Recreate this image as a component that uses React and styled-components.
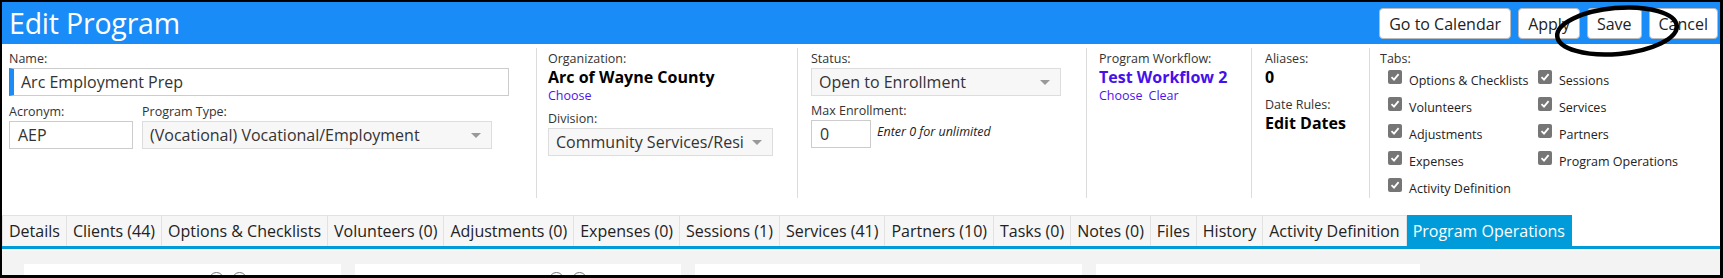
import React from 'react'
import styled, { createGlobalStyle } from 'styled-components'

const GlobalStyle = createGlobalStyle`
	html, body {
		margin: 0;
		padding: 0;
		background: #fff;
	}
	body {
		font-family: 'Segoe UI', 'Open Sans', 'Noto Sans', sans-serif;
		color: #222;
	}
`

const Frame = styled.div`
	position: relative;
	width: 1723px;
	height: 278px;
	box-sizing: border-box;
	border: 2px solid #000;
	border-right-width: 3px;
	border-bottom-width: 3px;
	overflow: hidden;
	display: flex;
	flex-direction: column;
`

const Header = styled.header`
	height: 42px;
	flex: none;
	background: #1a8cf8;
	display: flex;
	align-items: center;
	justify-content: space-between;
	padding: 0 2px 0 7px;
`

const Title = styled.h1`
	margin: 0;
	font-size: 28.5px;
	font-weight: 400;
	color: #fff;
	letter-spacing: -0.2px;
`

const Actions = styled.div`
	display: flex;
	gap: 7px;
	padding-top: 1px;
`

const HeaderButton = styled.button`
	height: 31px;
	padding: 0 9px;
	background: #fff;
	border: 1px solid #bbb;
	border-radius: 4px;
	font-family: inherit;
	font-size: 16px;
	color: #222;
`

const Annotation = styled.svg`
	position: absolute;
	left: 1545px;
	top: 0;
	width: 140px;
	height: 62px;
	pointer-events: none;
`

const Form = styled.div`
	display: flex;
	height: 171px;
	flex: none;
`

const Column = styled.div`
	width: ${(p) => p.$width}px;
	flex: ${(p) => (p.$width ? 'none' : '1')};
	box-sizing: border-box;
	margin: 4px 0 17px;
	padding: 4px 0 0 ${(p) => p.$pad}px;
	border-left: ${(p) => (p.$first ? 'none' : '1px solid #dcdcdc')};
`

const Label = styled.div`
	font-size: 12.5px;
	line-height: 14px;
	color: #333;
	margin-top: ${(p) => p.$gap || 0}px;
`

const Value = styled.div`
	font-size: 16px;
	font-weight: 700;
	line-height: 22px;
	color: ${(p) => (p.$link ? '#4510ec' : '#000')};
`

const Links = styled.div`
	display: flex;
	gap: 6px;
	font-size: 12.5px;
	line-height: 16px;
	color: #4c14ee;
`

const TextInput = styled.div`
	box-sizing: border-box;
	width: ${(p) => p.$width}px;
	height: 28px;
	margin-top: 2px;
	display: flex;
	align-items: center;
	padding-left: ${(p) => (p.$required ? 7 : 8)}px;
	border: 1px solid #ccc;
	border-left: ${(p) => (p.$required ? '5px solid #1a8cf8' : '1px solid #ccc')};
	background: #fff;
	font-size: 16px;
	color: #333;
`

const Select = styled.div`
	box-sizing: border-box;
	width: ${(p) => p.$width}px;
	height: 28px;
	margin-top: 2px;
	display: flex;
	align-items: center;
	padding: 0 10px 0 7px;
	border: 1px solid #ddd;
	background: #f7f7f7;
	font-size: 16px;
	color: #333;
`

const SelectText = styled.span`
	flex: 1;
	overflow: hidden;
	white-space: nowrap;
`

const Caret = styled.span`
	flex: none;
	width: 0;
	height: 0;
	margin-left: 8px;
	border-left: 5px solid transparent;
	border-right: 5px solid transparent;
	border-top: 5px solid #999;
`

const Row = styled.div`
	display: flex;
	gap: ${(p) => p.$gap || 0}px;
	align-items: flex-start;
`

const Field = styled.div`
	display: flex;
	flex-direction: column;
`

const Hint = styled.span`
	font-size: 12.5px;
	font-style: italic;
	color: #222;
	margin-top: 5px;
`

const CheckGrid = styled.div`
	display: grid;
	grid-template-columns: 150px auto;
	grid-auto-rows: 27px;
	margin: 2px 0 0 8px;
`

const CheckItem = styled.label`
	display: flex;
	align-items: flex-start;
	gap: 7px;
	font-size: 12.5px;
	color: #222;
	line-height: 16px;
	padding-top: 5px;
`

const Box = styled.span`
	flex: none;
	width: 14px;
	height: 14px;
	border-radius: 2px;
	background: #767676;
	display: flex;
	align-items: center;
	justify-content: center;
	margin-top: -3px;
`

const TabBar = styled.nav`
	display: flex;
	height: 31px;
	flex: none;
	border-bottom: 3px solid #009cd9;
`

const Tab = styled.div`
	display: flex;
	align-items: center;
	padding: 0 6px;
	background: ${(p) => (p.$active ? '#009cd9' : '#f6f6f6')};
	color: ${(p) => (p.$active ? '#fff' : '#222')};
	border: 1px solid ${(p) => (p.$active ? '#009cd9' : '#e2e2e2')};
	border-bottom: none;
	font-size: 16px;
	white-space: nowrap;
	& + & {
		border-left: none;
	}
`

const Content = styled.div`
	flex: 1;
	margin-top: 2px;
	background: #f3f3f3;
	display: flex;
	gap: 14px;
	padding: 13px 0 0 22px;
`

const Card = styled.div`
	width: ${(p) => p.$width}px;
	background: #fff;
	display: flex;
	gap: 8px;
	padding: 8px 0 0 ${(p) => p.$icons}px;
	box-sizing: border-box;
`

const RoundIcon = styled.span`
	width: 13px;
	height: 13px;
	border: 1.5px solid #777;
	border-radius: 50%;
`

const Check = () => (
	<svg width='10' height='10' viewBox='0 0 10 10'>
		<path d='M1.5 5.2 L4 7.6 L8.6 2.2' fill='none' stroke='#fff' strokeWidth='1.8' />
	</svg>
)

const tabOptions = [
	['Options & Checklists', 'Sessions'],
	['Volunteers', 'Services'],
	['Adjustments', 'Partners'],
	['Expenses', 'Program Operations'],
	['Activity Definition', null],
]

const tabs = [
	'Details',
	'Clients (44)',
	'Options & Checklists',
	'Volunteers (0)',
	'Adjustments (0)',
	'Expenses (0)',
	'Sessions (1)',
	'Services (41)',
	'Partners (10)',
	'Tasks (0)',
	'Notes (0)',
	'Files',
	'History',
	'Activity Definition',
	'Program Operations',
]

const App = () => {
	return (
		<Frame>
			<GlobalStyle />
			<Header>
				<Title>Edit Program</Title>
				<Actions>
					<HeaderButton>Go to Calendar</HeaderButton>
					<HeaderButton>Apply</HeaderButton>
					<HeaderButton>Save</HeaderButton>
					<HeaderButton>Cancel</HeaderButton>
				</Actions>
			</Header>

			<Annotation viewBox='0 0 140 62'>
				<ellipse
					cx='70'
					cy='29'
					rx='60'
					ry='23'
					transform='rotate(-5 70 29)'
					fill='none'
					stroke='#000'
					strokeWidth='4.5'
				/>
			</Annotation>

			<Form>
				<Column $width={534} $pad={7} $first>
					<Label>Name:</Label>
					<TextInput $width={500} $required>
						Arc Employment Prep
					</TextInput>
					<Row $gap={9}>
						<Field>
							<Label $gap={9}>Acronym:</Label>
							<TextInput $width={124}>AEP</TextInput>
						</Field>
						<Field>
							<Label $gap={9}>Program Type:</Label>
							<Select $width={350}>
								<SelectText>(Vocational) Vocational/Employment</SelectText>
								<Caret />
							</Select>
						</Field>
					</Row>
				</Column>

				<Column $width={261} $pad={11}>
					<Label>Organization:</Label>
					<Value>Arc of Wayne County</Value>
					<Links>
						<span>Choose</span>
					</Links>
					<Label $gap={8}>Division:</Label>
					<Select $width={225}>
						<SelectText>Community Services/Residential</SelectText>
						<Caret />
					</Select>
				</Column>

				<Column $width={289} $pad={13}>
					<Label>Status:</Label>
					<Select $width={250}>
						<SelectText>Open to Enrollment</SelectText>
						<Caret />
					</Select>
					<Label $gap={8}>Max Enrollment:</Label>
					<Row $gap={6}>
						<TextInput $width={60}>0</TextInput>
						<Hint>Enter 0 for unlimited</Hint>
					</Row>
				</Column>

				<Column $width={165} $pad={12}>
					<Label>Program Workflow:</Label>
					<Value $link>Test Workflow 2</Value>
					<Links>
						<span>Choose</span>
						<span>Clear</span>
					</Links>
				</Column>

				<Column $width={118} $pad={13}>
					<Label>Aliases:</Label>
					<Value>0</Value>
					<Label $gap={10}>Date Rules:</Label>
					<Value>Edit Dates</Value>
				</Column>

				<Column $pad={10}>
					<Label>Tabs:</Label>
					<CheckGrid>
						{tabOptions.flat().map((name, i) =>
							name ? (
								<CheckItem key={i}>
									<Box>
										<Check />
									</Box>
									{name}
								</CheckItem>
							) : (
								<span key={i} />
							)
						)}
					</CheckGrid>
				</Column>
			</Form>

			<TabBar>
				{tabs.map((name, i) => (
					<Tab key={name} $active={i === tabs.length - 1}>
						{name}
					</Tab>
				))}
			</TabBar>

			<Content>
				<Card $width={317} $icons={185}>
					<RoundIcon />
					<RoundIcon />
				</Card>
				<Card $width={326} $icons={194}>
					<RoundIcon />
					<RoundIcon />
				</Card>
				<Card $width={387} />
				<Card $width={324} />
			</Content>
		</Frame>
	)
}

export default App
